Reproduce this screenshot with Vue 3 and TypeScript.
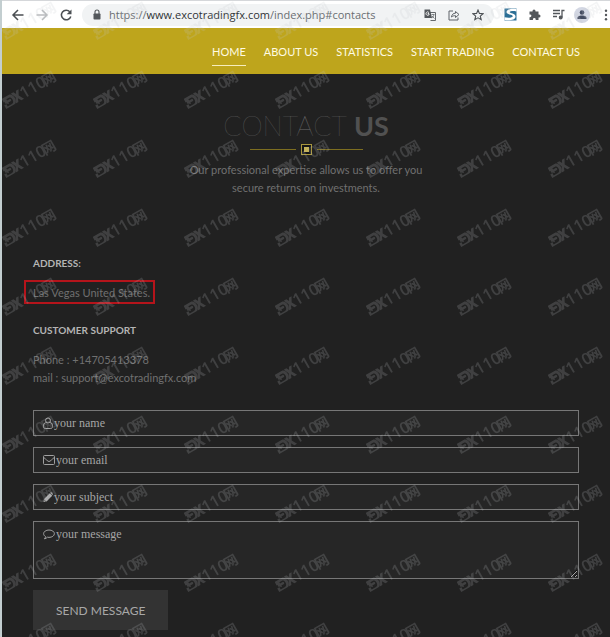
<script setup lang="ts">
import { ref } from 'vue'

interface NavItem {
  label: string
  href: string
}

const navItems: NavItem[] = [
  { label: 'HOME', href: '#home' },
  { label: 'ABOUT US', href: '#about' },
  { label: 'STATISTICS', href: '#statistics' },
  { label: 'START TRADING', href: '#trading' },
  { label: 'CONTACT US', href: '#contacts' },
]

const active = ref('HOME')
const url = ref('https://www.excotradingfx.com/index.php#contacts')
const name = ref('')
const email = ref('')
const subject = ref('')
const message = ref('')
</script>

<template>
  <div class="window">
    <header class="browser">
      <button class="tool" type="button" aria-label="Back">
        <svg viewBox="0 0 16 16" width="16" height="16" class="line dark"><path d="M13.5 8H3M8 3L3 8l5 5" /></svg>
      </button>
      <button class="tool" type="button" aria-label="Forward">
        <svg viewBox="0 0 16 16" width="16" height="16" class="line pale"><path d="M2.5 8H13M8 3l5 5-5 5" /></svg>
      </button>
      <button class="tool" type="button" aria-label="Reload">
        <svg viewBox="0 0 16 16" width="16" height="16" class="line dark"><path d="M12.8 9.500A4.800 4.800 0 1 1 11.800 4.800" /><path d="M13.500 2.500v4.800H8.700z" class="solid" /></svg>
      </button>
      <div class="address-bar">
        <svg viewBox="0 0 10 12" width="10" height="12" class="lock"><rect x="1.500" y="4.500" width="7" height="6" rx=".8" fill="#53575b" /><path d="M3 5V3a2 2 0 0 1 4 0v2" fill="none" stroke="#53575b" stroke-width="1.100" /></svg>
        <div class="url" :title="url"><span>https://</span><b>www.excotradingfx.com</b><span>/index.php#contacts</span></div>
        <button class="tool small" type="button" aria-label="Translate">
          <svg viewBox="0 0 12 12" width="12" height="12"><path d="M5 3.500h6.500v8H6.500" fill="#f1f3f4" stroke="#65696d" /><path d="M.5.500H6L8 9H.5z" fill="#53575b" /><path d="M5 4.500H3.800v.2M5 3.600A1.700 1.700 0 1 0 5.300 5H4" fill="none" stroke="#fff" stroke-width=".8" /><path d="M7.500 5.500h3M9.800 5.500c0 2-1.300 3-2 3.500M8 7l2.500 2.500" fill="none" stroke="#65696d" stroke-width=".8" /></svg>
        </button>
        <button class="tool small" type="button" aria-label="Share">
          <svg viewBox="0 0 12 12" width="12" height="12" fill="none" stroke="#5f6368" stroke-linejoin="round"><path d="M5 2H1v9h9V8.500" /><path d="M3.500 8c.3-2.500 1.800-3.800 4-3.800V2.500l3.500 3-3.500 3V6.700C5.800 6.600 4.500 7 3.500 8z" /></svg>
        </button>
        <button class="tool small" type="button" aria-label="Bookmark">
          <svg viewBox="0 0 12 12" width="12" height="12" fill="none" stroke="#4c5054" stroke-width="1.100"><path d="M6 1l1.400 3.400 3.700.3-2.800 2.400.9 3.600L6 8.800l-3.200 1.900.9-3.600L.9 4.700l3.700-.3z" /></svg>
        </button>
      </div>
      <div class="extensions">
        <button class="tool small" type="button" aria-label="Extension">
          <svg viewBox="0 0 13 13" width="13" height="13"><rect x=".5" y=".5" width="12" height="12" fill="#2c6f96" /><path d="M12.500 1C7 0 1.800 1.500 2.600 4.600c.7 2.400 5.800 1.700 6.100 3.500.2 1.600-4 2-8.200 1.200V12c5 .8 11.200.2 11-3.700C11.300 4.900 5.900 5.700 5.800 4.200c0-1.200 3.500-1.400 6.700-.6z" fill="#fff" /></svg>
        </button>
        <button class="tool small" type="button" aria-label="Extensions">
          <svg viewBox="0 0 13 13" width="13" height="13" fill="#53575b"><path d="M1.500 3.500h3V3a1.500 1.500 0 0 1 3 0v.5h3v3h.5a1.500 1.500 0 0 1 0 3h-.5V12H7.700v-.5a1.400 1.400 0 0 0-2.800 0v.5H1.500V9.200H2a1.400 1.400 0 0 0 0-2.800h-.5z" /></svg>
        </button>
        <button class="tool small" type="button" aria-label="Media">
          <svg viewBox="0 0 13 13" width="13" height="13" fill="none" stroke="#53575b" stroke-width="1.300"><path d="M1 2.500h7M1 5.500h7M1 8.500h4M10 9.500v-7h2.500" /><circle cx="8.700" cy="9.500" r="1.300" fill="#53575b" /></svg>
        </button>
        <button class="tool avatar" type="button" aria-label="Profile">
          <svg viewBox="0 0 16 16" width="16" height="16"><circle cx="8" cy="8" r="8" fill="#d3d7e3" /><circle cx="8" cy="5.500" r="2.300" fill="#434b60" /><path d="M3.500 12V10.800C3.500 9 6.500 8.500 8 8.500s4.500.5 4.500 2.300V12z" fill="#434b60" /></svg>
        </button>
        <button class="tool menu" type="button" aria-label="Menu">
          <svg viewBox="0 0 4 12" width="4" height="12" fill="#53575b"><circle cx="2" cy="1.800" r="1.200" /><circle cx="2" cy="6" r="1.200" /><circle cx="2" cy="10.200" r="1.200" /></svg>
        </button>
      </div>
    </header>

    <nav class="nav">
      <a
        v-for="item in navItems"
        :key="item.label"
        :href="item.href"
        :class="{ active: item.label === active }"
        @click="active = item.label"
      >{{ item.label }}</a>
    </nav>

    <main class="page">
      <section class="intro">
        <h1>CONTACT <strong>US</strong></h1>
        <div class="divider"><i></i><svg viewBox="0 0 11 11" width="11" height="11"><rect x=".5" y=".5" width="10" height="10" fill="#151515" stroke="#a8963c" /><rect x="3" y="3" width="5" height="5" fill="#c3b25b" /></svg><i></i></div>
        <p>Our professional expertise allows us to offer you<br />secure returns on investments.</p>
      </section>

      <section class="details">
        <h2>ADDRESS:</h2>
        <p><span class="marked">Las Vegas United States.</span></p>
        <h2>CUSTOMER SUPPORT</h2>
        <p>Phone : +14705413378<br />mail : support@excotradingfx.com</p>
      </section>

      <form class="form" @submit.prevent>
        <label class="field">
          <svg viewBox="0 0 10 12" width="10" height="12" class="icon"><circle cx="5" cy="3.500" r="2.500" /><path d="M2.700 5.500C1 6 .5 7.500.5 9.500c0 1.300.7 2 1.800 2h5.400c1.100 0 1.800-.7 1.800-2 0-2-.5-3.500-2.200-4" /></svg>
          <input v-model="name" type="text" placeholder="your name" aria-label="your name" />
        </label>
        <label class="field">
          <svg viewBox="0 0 12 12" width="12" height="12" class="icon"><rect x=".5" y="1.500" width="11" height="9" rx="1" /><path d="M.8 3.500C3 5.300 4.800 7.500 6 7.500S9 5.300 11.200 3.500" /></svg>
          <input v-model="email" type="email" placeholder="your email" aria-label="your email" />
        </label>
        <label class="field">
          <svg viewBox="0 0 10 12" width="10" height="12" class="icon"><path d="M.5 11l.6-3L6.800 2.300l2.400 2.400L3.500 10.400z" fill="#aaa" stroke="none" /><path d="M7.300 1.800l.8-.7 2 2-.7.900z" fill="#aaa" stroke="none" /><path d="M1.300 9l1.200 1.200" stroke="#252525" /></svg>
          <input v-model="subject" type="text" placeholder="your subject" aria-label="your subject" />
        </label>
        <label class="field tall">
          <svg viewBox="0 0 12 12" width="12" height="12" class="icon"><path d="M6 2C3 2 .6 3.600.6 5.700c0 1.200.8 2.200 2 2.900-.1.900-.6 1.600-1.200 2.200 1.300-.2 2.300-.8 3-1.600.5.100 1 .2 1.600.2 3 0 5.400-1.600 5.400-3.700S9 2 6 2z" /></svg>
          <textarea v-model="message" placeholder="your message" aria-label="your message"></textarea>
        </label>
        <button class="send" type="submit">SEND MESSAGE</button>
      </form>
    </main>

    <svg class="watermark" width="100%" height="100%" aria-hidden="true">
      <defs>
        <pattern id="mark" width="91" height="69" patternUnits="userSpaceOnUse">
          <g transform="translate(6 39) rotate(-30)">
            <path fill-rule="evenodd" d="M-1-11H7C9.500-11 11-8.500 11-5.500S9.500 0 7 0H-2V-4H0V-7H-1zM3-8.500V-7H6C7-7 7-4.500 6-4.500H3V-3L.5-5V-1.500H5.500C9-1.500 9-8.500 6-8.500z" />
            <path d="M9.500-11H12.500L14-8 15.500-11H18.500L15.500-5.500 18.500 0H15.500L13.500-3.500 12 0H9L12-5.500z" />
            <text x="18" y="0" class="digits">110</text>
            <text x="43" y="0" class="han">网</text>
          </g>
        </pattern>
      </defs>
      <rect width="100%" height="100%" fill="url(#mark)" />
    </svg>
  </div>
</template>

<style>
body {
  background: #212121;
}
</style>

<style scoped>
.window {
  position: relative;
  min-height: 100vh;
  box-sizing: border-box;
  overflow: hidden;
  border-left: 2px solid #c3ced0;
  background: #212121;
  color: #707070;
  font-family: Lato, 'Liberation Sans', sans-serif;
}

.browser {
  display: flex;
  align-items: center;
  height: 28px;
  padding-left: 8px;
  gap: 8px;
  box-sizing: border-box;
  border-top: 1px solid #d5d7da;
  background: #fff;
}

.tool {
  display: grid;
  place-items: center;
  flex: none;
  width: 16px;
  height: 16px;
  padding: 0;
  border: 0;
  background: none;
}

.line {
  fill: none;
  stroke-width: 1.5;
}

.dark {
  stroke: #4b4f53;
}

.pale {
  stroke: #b9bbbd;
}

.solid {
  fill: #4b4f53;
  stroke: none;
}

.address-bar {
  display: flex;
  flex: 1;
  align-items: center;
  min-width: 0;
  height: 22px;
  padding: 0 8px 0 10px;
  border-radius: 11px;
  background: #f1f3f4;
}

.lock {
  flex: none;
  margin-right: 7px;
}

.url {
  flex: 1;
  overflow: hidden;
  color: #6a6e72;
  font: 11px/20px 'Open Sans', 'Noto Sans', sans-serif;
  white-space: nowrap;
}

.url b {
  color: #303336;
  font-weight: 400;
}

.address-bar .tool {
  margin-left: 8px;
}

.extensions {
  display: flex;
  align-items: center;
  gap: 8px;
}

.extensions .menu {
  justify-items: end;
  width: 12px;
  padding-right: 2px;
}

.nav {
  display: flex;
  justify-content: flex-end;
  align-items: center;
  gap: 18px;
  height: 46px;
  padding: 0 30px;
  background: #bea51c;
}

.nav a {
  padding: 6px 0 3px;
  border-bottom: 1px solid transparent;
  color: #fffbe2;
  font-size: 11px;
  line-height: 20px;
  text-decoration: none;
  white-space: nowrap;
}

.nav a.active {
  border-color: #f6edbd;
}

.page {
  padding: 34px 31px 7px;
}

.intro {
  text-align: center;
}

h1 {
  margin: 0;
  color: #6a6a6a;
  font-size: 27px;
  font-weight: 200;
  line-height: 36px;
}

h1 strong {
  color: #515151;
  font-weight: 700;
}

.divider {
  display: flex;
  justify-content: center;
  align-items: center;
  gap: 5px;
  height: 11px;
}

.divider i {
  width: 46px;
  height: 1px;
  background: #7d6e20;
}

p {
  margin: 0;
  font-size: 11px;
  line-height: 18px;
}

.intro p {
  margin-top: 6px;
}

.details {
  padding-top: 56px;
}

h2 {
  margin: 0 0 11px;
  color: #b4b4b4;
  font-size: 10px;
  font-weight: 700;
  line-height: 20px;
}

.details p + h2 {
  margin-top: 18px;
}

.marked {
  position: relative;
}

.marked::after {
  position: absolute;
  inset: -6px -5px -5px -9px;
  border: 2px solid #b5141b;
  content: '';
}

.form {
  display: flex;
  flex-direction: column;
  align-items: flex-start;
  gap: 11px;
  padding-top: 23px;
}

.field {
  display: flex;
  width: 100%;
  height: 26px;
  box-sizing: border-box;
  border: 1px solid #777;
  background: #262626;
}

.tall {
  height: 58px;
}

.icon {
  flex: none;
  margin: 6px 0 0 9px;
  fill: none;
  stroke: #a0a0a0;
}

input,
textarea {
  flex: 1;
  min-width: 0;
  box-sizing: border-box;
  padding: 4px 1px;
  border: 0;
  outline: 0;
  background: transparent;
  color: #aaa;
  font: 12px/16px 'Liberation Serif', serif;
}

::placeholder {
  color: #a5a5a5;
  opacity: 1;
}

.send {
  height: 40px;
  padding: 0 23px;
  border: 0;
  background: #333;
  color: #a8a8a8;
  font: 12px Lato, 'Liberation Sans', sans-serif;
}

/* Repeating mark laid over the whole window */
.watermark {
  position: absolute;
  inset: 0;
  pointer-events: none;
  fill: #c4c8cc;
  opacity: 0.19;
}

.digits {
  font: 600 16px 'Open Sans', sans-serif;
}

.han {
  font: 700 14px 'Noto Sans CJK SC', sans-serif;
}
</style>
